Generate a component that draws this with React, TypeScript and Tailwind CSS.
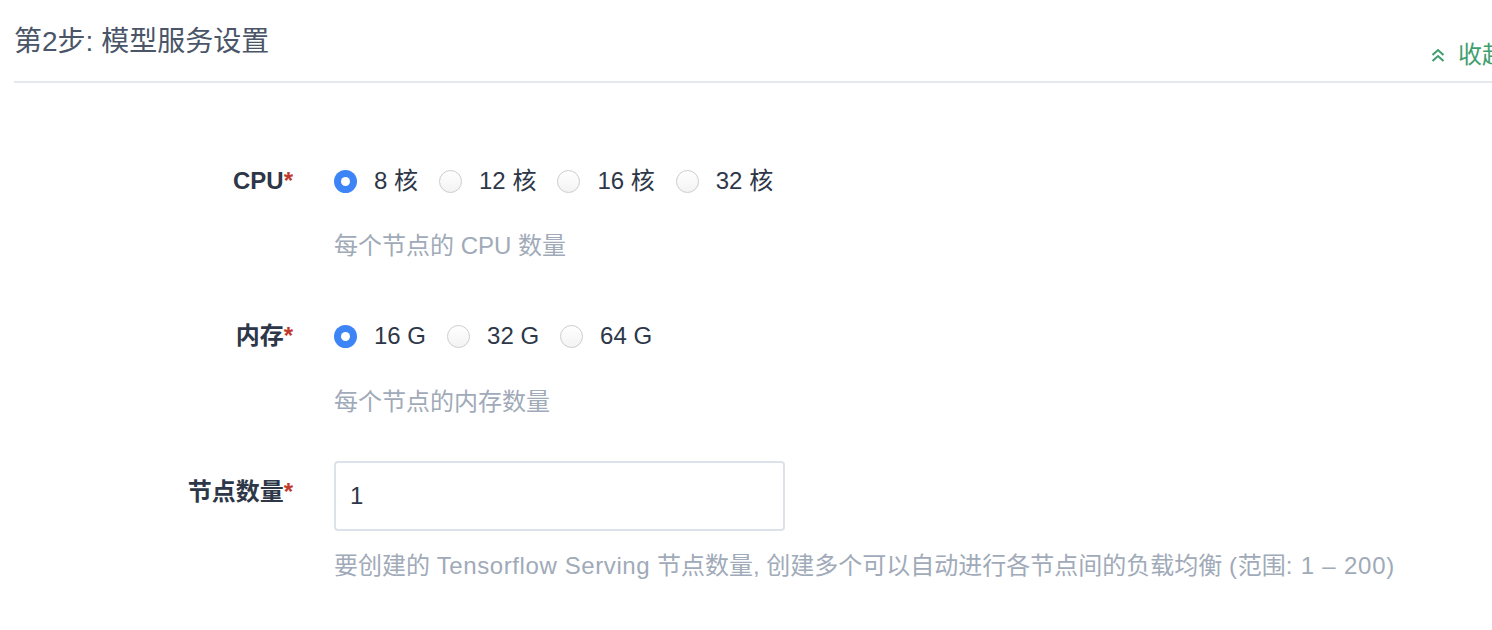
import { useState } from "react";

const font = {
  fontFamily: '"Liberation Sans", "Noto Sans CJK SC", sans-serif',
};

function Radio({ checked, label, onClick }: { checked: boolean; label: string; onClick: () => void }) {
  return (
    <button type="button" onClick={onClick} className="mr-[21px] flex items-center">
      {checked ? (
        <span className="flex h-[23px] w-[23px] items-center justify-center rounded-full bg-[#3d84f7]">
          <span className="h-[9px] w-[9px] rounded-full bg-white" />
        </span>
      ) : (
        <span className="h-[23px] w-[23px] rounded-full border border-[#cccccc] bg-gradient-to-b from-white to-[#f3f3f3]" />
      )}
      <span className="ml-[17px] text-[24px] leading-[36px] text-[#2d3748]">{label}</span>
    </button>
  );
}

function Field({ label, hint, children }: { label: string; hint: string; children: React.ReactNode }) {
  return (
    <div className="flex">
      <div className="w-[293px] shrink-0 text-right text-[24px] font-bold leading-[36px] text-[#2d3748]">
        {label}
        <span className="text-[#c0392b]">*</span>
      </div>
      <div className="ml-[41px] flex flex-col">
        {children}
        <p className="text-[24px] leading-[36px] text-[#a0aab8]">{hint}</p>
      </div>
    </div>
  );
}

export default function App() {
  const [cpu, setCpu] = useState("8 核");
  const [mem, setMem] = useState("16 G");
  const [nodes, setNodes] = useState("1");

  return (
    <div className="h-[630px] w-[1492px] overflow-hidden bg-white" style={font}>
      <div className="ml-[14px] w-[1492px]">
        <div className="flex h-[83px] items-start justify-between border-b-2 border-[#e5e9ef] pt-[23px]">
          <h2 className="text-[28px] leading-[38px] text-[#4a5568]">第2步: 模型服务设置</h2>
          <button type="button" className="mt-[14px] flex items-center text-[24px] leading-[36px] text-[#3f9e6e]">
            <svg width="16" height="16" viewBox="0 0 16 16" fill="none" stroke="currentColor" strokeWidth="2">
              <path d="M2.5 8l5.5-5 5.5 5" />
              <path d="M2.5 14l5.5-5 5.5 5" />
            </svg>
            <span className="ml-[12px]">收起</span>
          </button>
        </div>

        <div className="flex flex-col pt-[80px]">
          <div className="-ml-[14px]">
            <Field label="CPU" hint="每个节点的 CPU 数量">
              <div className="mb-[29px] flex items-center">
                {["8 核", "12 核", "16 核", "32 核"].map((o) => (
                  <Radio key={o} label={o} checked={cpu === o} onClick={() => setCpu(o)} />
                ))}
              </div>
            </Field>
          </div>

          <div className="-ml-[14px] mt-[54px]">
            <Field label="内存" hint="每个节点的内存数量">
              <div className="mb-[30px] flex items-center">
                {["16 G", "32 G", "64 G"].map((o) => (
                  <Radio key={o} label={o} checked={mem === o} onClick={() => setMem(o)} />
                ))}
              </div>
            </Field>
          </div>

          <div className="-ml-[14px] mt-[41px] flex">
            <div className="w-[293px] shrink-0 pt-[13px] text-right text-[24px] font-bold leading-[36px] text-[#2d3748]">
              节点数量<span className="text-[#c0392b]">*</span>
            </div>
            <div className="ml-[41px] flex flex-col">
              <input
                value={nodes}
                onChange={(e) => setNodes(e.target.value)}
                className="h-[70px] w-[451px] rounded-[4px] border-2 border-[#dce2ea] px-[14px] text-[24px] text-[#2d3748] outline-none"
              />
              <p className="mt-[17px] whitespace-nowrap text-[24px] leading-[36px] text-[#a0aab8]">
                要创建的 <span className="tracking-[0.6px]">Tensorflow Serving</span> 节点数量, 创建多个可以自动进行各节点间的负载均衡{" "}
                <span className="tracking-[0.8px]">(</span>范围<span className="tracking-[0.8px]">: 1 – 200)</span>
              </p>
            </div>
          </div>
        </div>
      </div>
    </div>
  );
}
